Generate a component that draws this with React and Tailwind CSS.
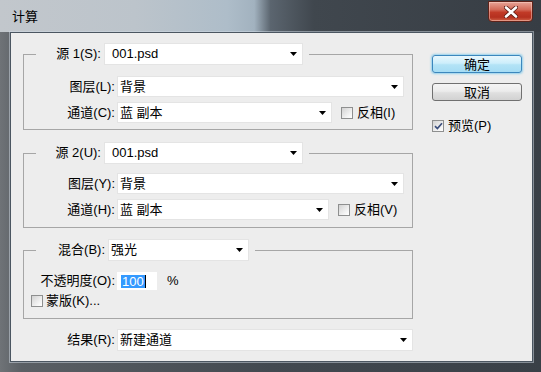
import React from "react";

function Arrow() {
  return (
    <svg width="7" height="4" viewBox="0 0 7 4" className="shrink-0">
      <path d="M0 0H7L3.5 4Z" fill="#000" />
    </svg>
  );
}

function Select({ className, text, textClass }) {
  return (
    <div
      className={
        "flex items-center justify-between bg-white border border-[#e4e4e4] pr-[5px] " +
        className
      }
    >
      <span className={"leading-[16px] whitespace-nowrap " + textClass}>{text}</span>
      <Arrow />
    </div>
  );
}

function Check({ checked }) {
  return (
    <span className="w-[12px] h-[12px] border border-[#8e8f8f] bg-[linear-gradient(135deg,#d2d2d2,#f4f4f4_70%,#ffffff)] flex items-center justify-center shrink-0">
      {checked && (
        <svg width="9" height="8" viewBox="0 0 9 8">
          <path d="M1 4.2L3.4 6.6L8 1.2" fill="none" stroke="#3c4f7d" strokeWidth="1.7" />
        </svg>
      )}
    </span>
  );
}

function Row({ label, children, className }) {
  return (
    <div className={"flex items-center h-[21px] " + (className || "")}>
      <span className="w-[91px] text-right leading-[16px] whitespace-nowrap">{label}</span>
      <div className="ml-[2px] flex items-center">{children}</div>
    </div>
  );
}

export default function App() {
  return (
    <div className="w-[541px] h-[372px] overflow-hidden bg-[linear-gradient(to_right,#6f7377,#5a5f64_4%,#424950_50%,#394047)] font-['Liberation_Sans','Noto_Sans_CJK_SC',sans-serif] text-[13px] text-black">
      {/* title bar */}
      <div className="h-[32px] flex items-start justify-between bg-[linear-gradient(to_right,#c2c7cc,#bcc4cb_25%,#aebdc9_42%,#a2b2bf_47%,#5b656f_50%,#40474e_58%,#373d44)]">
        <span className="pl-[12px] pt-[9px] leading-[16px]">计算</span>
        <div className="mr-[8px] mt-[1px] w-[45px] h-[21px] rounded-b-[4px] border border-[#5e2219] bg-[linear-gradient(#e7a497,#d36a58_40%,#c13a27_55%,#b5301f_80%,#cf6247)] shadow-[inset_0_0_0_1px_rgba(255,220,210,0.45)] flex items-center justify-center">
          <svg width="14" height="12" viewBox="0 0 14 12">
            <path
              d="M2 1.5L12 10.5M12 1.5L2 10.5"
              stroke="#5a1c14"
              strokeWidth="4.2"
              strokeLinecap="round"
            />
            <path
              d="M2 1.5L12 10.5M12 1.5L2 10.5"
              stroke="#ffffff"
              strokeWidth="2.6"
              strokeLinecap="round"
            />
          </svg>
        </div>
      </div>

      {/* client area */}
      <div className="ml-[10px] w-[523px] h-[330px] bg-[#ededed] border border-[#4b5661] shadow-[0_0_0_1px_rgba(210,220,230,0.5)] flex pl-[12px] pt-[10px]">
        {/* left column */}
        <div className="w-[391px] flex flex-col">
          {/* group 1 */}
          <fieldset className="w-[390px] border border-[#a6a6a6] pb-[6px]">
            <legend className="ml-[12px] pr-[6px]">
              <div className="flex items-center">
                <span className="w-[65px] text-right leading-[16px] whitespace-nowrap">源 1(S):</span>
                <Select className="ml-[3px] w-[199px] h-[22px]" textClass="pl-[7px]" text="001.psd" />
              </div>
            </legend>
            <div className="mt-[11px] flex flex-col gap-[5px]">
              <Row label="图层(L):">
                <Select className="w-[287px] h-[21px]" textClass="pl-[2px]" text="背景" />
              </Row>
              <Row label="通道(C):">
                <Select className="w-[215px] h-[21px]" textClass="pl-[2px]" text="蓝 副本" />
                <div className="ml-[9px] flex items-center gap-[4px]">
                  <Check />
                  <span className="leading-[16px]">反相(I)</span>
                </div>
              </Row>
            </div>
          </fieldset>

          {/* group 2 */}
          <fieldset className="mt-[12px] w-[390px] border border-[#a6a6a6] pb-[7px]">
            <legend className="ml-[12px] pr-[6px]">
              <div className="flex items-center">
                <span className="w-[65px] text-right leading-[16px] whitespace-nowrap">源 2(U):</span>
                <Select className="ml-[3px] w-[199px] h-[22px]" textClass="pl-[7px]" text="001.psd" />
              </div>
            </legend>
            <div className="mt-[9px] flex flex-col gap-[5px]">
              <Row label="图层(Y):">
                <Select className="w-[287px] h-[21px]" textClass="pl-[2px]" text="背景" />
              </Row>
              <Row label="通道(H):">
                <Select className="w-[212px] h-[21px]" textClass="pl-[2px]" text="蓝 副本" />
                <div className="ml-[9px] flex items-center gap-[4px]">
                  <Check />
                  <span className="leading-[16px]">反相(V)</span>
                </div>
              </Row>
            </div>
          </fieldset>

          {/* group 3 */}
          <fieldset className="mt-[11px] w-[390px] border border-[#a6a6a6] pb-[9px]">
            <legend className="ml-[12px] pr-[6px]">
              <div className="flex items-center">
                <span className="w-[69px] text-right leading-[16px] whitespace-nowrap">混合(B):</span>
                <Select className="ml-[3px] w-[141px] h-[22px]" textClass="pl-[2px]" text="强光" />
              </div>
            </legend>
            <div className="mt-[11px] flex items-center h-[18px]">
              <span className="w-[91px] text-right leading-[16px] whitespace-nowrap">不透明度(O):</span>
              <div className="ml-[2px] w-[40px] h-[18px] bg-white flex items-center pl-[4px]">
                <span className="bg-[#3399ff] text-white leading-[13px] h-[13px] px-[1px]">100</span>
                <span className="w-px h-[13px] bg-black" />
              </div>
              <span className="ml-[10px] leading-[16px]">%</span>
            </div>
            <div className="mt-[3px] h-[16px] flex items-center pl-[7px] gap-[3px]">
              <Check />
              <span className="leading-[16px]">蒙版(K)...</span>
            </div>
          </fieldset>

          {/* result */}
          <div className="mt-[10px] flex items-center h-[22px]">
            <span className="w-[92px] text-right leading-[16px] whitespace-nowrap">结果(R):</span>
            <Select className="ml-[2px] w-[296px] h-[22px]" textClass="pl-[2px]" text="新建通道" />
          </div>
        </div>

        {/* right column */}
        <div className="ml-[18px] w-[90px] mt-[12px] flex flex-col">
          <div className="h-[18px] w-[90px] rounded-[3px] border border-[#3c87bd] bg-[linear-gradient(#e8f7fd,#cdeefb_45%,#b3e3f6_55%,#a5dcf4)] shadow-[0_0_2px_1px_rgba(90,190,235,0.6)] flex items-center justify-center leading-none">
            确定
          </div>
          <div className="mt-[10px] h-[18px] w-[90px] rounded-[3px] border border-[#707070] bg-[linear-gradient(#f4f4f4,#ececec_45%,#dfdfdf_55%,#d2d2d2)] flex items-center justify-center leading-none">
            取消
          </div>
          <div className="mt-[18px] h-[13px] flex items-center gap-[4px]">
            <Check checked />
            <span className="leading-[16px]">预览(P)</span>
          </div>
        </div>
      </div>
    </div>
  );
}
